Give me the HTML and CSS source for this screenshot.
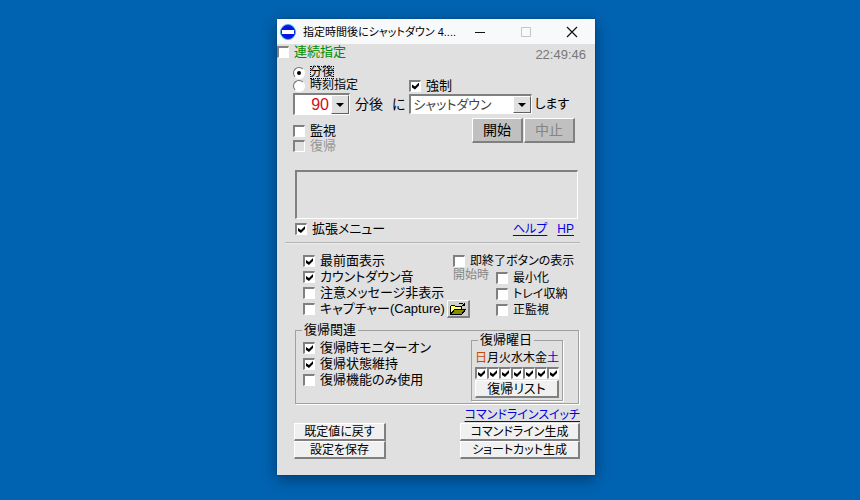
FILE: index.html
```html
<!DOCTYPE html>
<html lang="ja">
<head>
<meta charset="utf-8">
<title>指定時間後にシャットダウン</title>
<link rel="stylesheet" href="styles.css">
</head>
<body>
<main class="window">
  <header class="titlebar">
    <svg class="app-icon" viewBox="0 0 16 16" aria-hidden="true"><circle cx="8" cy="8" r="7.5" fill="#0b12e6" stroke="#35b6ee"/><rect x="2" y="6" width="12" height="4" fill="#fff"/></svg>
    <h1 class="title">指定時間後にシャットダウン 4....</h1>
    <button class="caption" aria-label="最小化ボタン"><svg viewBox="0 0 12 12"><path d="M1 6.500h10" stroke="#111"/></svg></button>
    <button class="caption" aria-label="最大化ボタン" disabled><svg viewBox="0 0 12 12"><path d="M1.500 1.500h9v9h-9z" stroke="#c4c4c4"/></svg></button>
    <button class="caption" aria-label="閉じる"><svg viewBox="0 0 12 12"><path d="M1 1l10 10M11 1L1 11" stroke="#111" stroke-width="1.200"/></svg></button>
  </header>

  <div class="top">
    <label class="opt repeat"><input type="checkbox">連続指定</label>
    <time class="clock">22:49:46</time>
  </div>

  <section class="timer">
    <div class="mode">
      <label class="opt small"><input type="radio" name="mode" checked><span class="focus">分後</span></label>
      <label class="opt small mode-time"><input type="radio" name="mode">時刻指定</label>
      <label class="opt"><input type="checkbox" checked>強制</label>
    </div>
    <div class="sentence">
      <span class="combo minutes"><select aria-label="分"><option>90</option></select></span>
      <span class="after">分後</span><span class="ni">に</span>
      <span class="combo action"><select aria-label="動作"><option>シャットダウン</option></select></span>
      <span>します</span>
    </div>
    <div class="run">
      <div class="watch">
        <label class="opt"><input type="checkbox">監視</label>
        <label class="opt disabled"><input type="checkbox" disabled>復帰</label>
      </div>
      <div class="run-buttons">
        <button class="btn big">開始</button>
        <button class="btn big" disabled>中止</button>
      </div>
    </div>
  </section>

  <div class="status" role="status"></div>

  <div class="menu-row">
    <label class="opt"><input type="checkbox" checked>拡張メニュー</label>
    <nav class="links small"><a href="#help">ヘルプ</a><a href="#hp">HP</a></nav>
  </div>
  <hr class="rule">

  <section class="options">
    <div class="list">
      <label class="opt"><input type="checkbox" checked>最前面表示</label>
      <label class="opt"><input type="checkbox" checked>カウントダウン音</label>
      <label class="opt"><input type="checkbox">注意メッセージ非表示</label>
      <div class="capture">
        <label class="opt"><input type="checkbox">キャプチャー(Capture)</label>
        <button class="btn folder" aria-label="フォルダー"><svg viewBox="0 0 18 14" shape-rendering="crispEdges"><path d="M1.500 12.500V4.500l1-1h3l1 1h6v3" fill="#ffff70" stroke="#000"/><path d="M1.500 12.500l4-5h11l-4 5z" fill="#8c8c00" stroke="#000"/><path d="M9.500 2.500l1-1h3l2 2M15.500 1v3M13 3.500h3" fill="none" stroke="#000"/></svg></button>
      </div>
    </div>
    <div class="startup small">
      <label class="opt"><input type="checkbox">即終了ボタンの表示</label>
      <div class="on-start">
        <span class="hint">開始時</span>
        <div class="list">
          <label class="opt"><input type="checkbox">最小化</label>
          <label class="opt"><input type="checkbox">トレイ収納</label>
          <label class="opt"><input type="checkbox">正監視</label>
        </div>
      </div>
    </div>
  </section>

  <fieldset class="group resume">
    <legend>復帰関連</legend>
    <div class="resume-body">
      <div class="list">
        <label class="opt"><input type="checkbox" checked>復帰時モニターオン</label>
        <label class="opt"><input type="checkbox" checked>復帰状態維持</label>
        <label class="opt"><input type="checkbox">復帰機能のみ使用</label>
      </div>
      <fieldset class="group days">
        <legend>復帰曜日</legend>
        <div class="week">
          <label class="sun">日<input type="checkbox" checked></label>
          <label>月<input type="checkbox" checked></label>
          <label>火<input type="checkbox" checked></label>
          <label>水<input type="checkbox" checked></label>
          <label>木<input type="checkbox" checked></label>
          <label>金<input type="checkbox" checked></label>
          <label class="sat">土<input type="checkbox" checked></label>
        </div>
        <button class="btn light">復帰リスト</button>
      </fieldset>
    </div>
  </fieldset>

  <footer class="bottom">
    <a class="switches small" href="#switch">コマンドラインスイッチ</a>
    <div class="actions">
      <div class="stack">
        <button class="btn light small">既定値に戻す</button>
        <button class="btn light small">設定を保存</button>
      </div>
      <div class="stack wide">
        <button class="btn light small">コマンドライン生成</button>
        <button class="btn light small">ショートカット生成</button>
      </div>
    </div>
  </footer>
</main>
</body>
</html>
```
FILE: styles.css
```css
* { box-sizing: border-box; }

body {
  margin: 0;
  min-height: 100vh;
  padding: 19px 0 24px 12px;
  display: flex;
  justify-content: center;
  align-items: flex-start;
  background: #0063b1;
  color: #000;
  font: 13px/16px "Liberation Sans", "Noto Sans CJK JP", sans-serif;
  font-feature-settings: "palt";
}

button, input, select { font: inherit; color: inherit; margin: 0; font-feature-settings: inherit; }
a { color: #0000e0; text-underline-offset: 2px; }
.small { font-size: 12px; }

.window {
  width: 100%;
  max-width: 318px;
  background: #e0e0e0;
  box-shadow: 0 0 1px #002f5c, 0 4px 14px rgba(0, 20, 50, .5);
}

.titlebar { display: flex; align-items: center; height: 25px; padding-left: 3px; background: #f8f9fb; }
.app-icon { width: 16px; height: 16px; flex: none; }
.title {
  flex: 1;
  margin: 0 0 0 7px;
  font-size: 11px;
  font-weight: 400;
  white-space: nowrap;
}
.caption {
  flex: none;
  width: 46px;
  height: 25px;
  padding: 0;
  border: 0;
  background: none;
  display: grid;
  place-items: center;
}
.caption svg { width: 12px; height: 12px; fill: none; }

.opt { display: flex; align-items: center; gap: 5px; white-space: nowrap; }

input {
  appearance: none;
  flex: none;
  width: 12px;
  height: 12px;
  background: #fff;
  border: 1px solid #fff;
  border-top: 2px solid #808080;
  border-left: 2px solid #808080;
  display: grid;
  place-items: center;
}
input[type="checkbox"]:checked::before {
  content: "";
  width: 7px;
  height: 7px;
  background: #000;
  clip-path: polygon(0 2px, 3px 4px, 7px 0, 7px 3px, 3px 7px, 0 5px);
}
input[type="radio"] { border-width: 1px; border-radius: 50%; border-color: #707070 #fff #fff #707070; }
input[type="radio"]:checked::before { content: ""; width: 4px; height: 4px; border-radius: 50%; background: #000; }
input:disabled { background: #e0e0e0; }
.disabled { color: #969696; }

.top { display: flex; justify-content: space-between; align-items: flex-start; height: 22px; padding-right: 9px; }
.repeat { color: #008c00; }
.clock { margin-top: 3px; color: #777; }

.timer { padding: 0 20px 0 16px; }
.mode { display: grid; grid-template-columns: 116px 1fr; grid-auto-rows: 13px; }
.mode-time { grid-column: 1; }
.mode .opt { line-height: 13px; }
.focus { outline: 1px dotted #000; outline-offset: -1px; }

.sentence { display: flex; align-items: center; height: 22px; margin-top: 1px; white-space: nowrap; }
.after { margin-left: 5px; font-size: 14px; }
.ni { margin: 0 4px 0 9px; font-size: 14px; }

.combo {
  position: relative;
  display: block;
  border: 1px solid #fff;
  border-top: 2px solid #808080;
  border-left: 2px solid #808080;
  background: #fff;
}
.combo select {
  appearance: none;
  display: block;
  width: 100%;
  height: 100%;
  border: 0;
  padding: 0 17px 0 2px;
  background: none;
}
.combo::after {
  content: "";
  position: absolute;
  inset: 0 0 0 auto;
  width: 16px;
  pointer-events: none;
  background: #e0e0e0;
  border: 1px solid #fff;
  border-right-color: #606060;
  border-bottom-color: #606060;
}
.combo::before {
  content: "";
  position: absolute;
  z-index: 1;
  right: 5px;
  top: 50%;
  margin-top: -2px;
  border: 4px solid transparent;
  border-top: 4px solid #000;
  border-bottom: 0;
  pointer-events: none;
}
.minutes { width: 57px; height: 22px; }
.minutes select { color: #d01020; font-size: 16px; padding-right: 20px; text-align-last: right; }
.action { flex: 1; max-width: 123px; height: 20px; margin-right: 2px; }
.action select { color: #444; }

.run { display: flex; justify-content: space-between; align-items: flex-start; padding-top: 3px; height: 39px; }
.watch { padding-top: 5px; }
.watch .opt { height: 15px; }
.run-buttons { display: flex; gap: 1px; }

.btn {
  padding: 0;
  border: 1px solid #fff;
  border-right: 2px solid #808080;
  border-bottom: 2px solid #808080;
  background: #c0c0c0;
  white-space: nowrap;
}
.btn:disabled { color: #858585; }
.big { width: 51px; height: 25px; font-size: 14px; line-height: 20px; }
.light { display: block; width: 100%; height: 18px; line-height: 14px; background: #f0f0f0; }

.status {
  margin: 16px 17px 0 18px;
  height: 49px;
  border: 1px solid #fff;
  border-top: 2px solid #808080;
  border-left: 2px solid #808080;
}

.menu-row { display: flex; justify-content: space-between; margin: 2px 21px 0 18px; }
.links { display: flex; gap: 10px; }
.rule { margin: 5px 15px 0 8px; border: 0; border-top: 1px solid #b4b4b4; border-bottom: 1px solid #ececec; }

.options { display: flex; padding: 9px 16px 0 26px; }
.list { display: grid; grid-auto-rows: 16px; }
.options > .list { width: 150px; }
.options > .list > .opt:nth-child(3), .capture .opt { font-size: 13px; }
.capture { display: flex; align-items: center; justify-content: space-between; }
.folder { width: 23px; height: 18px; margin-right: -17px; display: grid; place-items: center; flex: none; background: #d0d0d0; }
.capture { padding-right: 0; width: 150px; }
.folder svg { width: 18px; height: 14px; }
.on-start { display: flex; gap: 7px; margin-top: 1px; }
.hint { width: 36px; line-height: 10px; color: #868686; }

.group { min-width: 0; margin: 0; border: 1px solid #a0a0a0; box-shadow: 1px 1px 0 #fff; }
.group legend { padding: 0 2px; line-height: 16px; }
.resume { margin: 4px 16px 0 18px; padding: 2px 15px 2px 7px; }
.resume legend { margin-left: -1px; }
.resume-body { display: flex; justify-content: space-between; align-items: flex-start; }
.days { width: 92px; margin-top: -8px; padding: 2px 3px; }
.days legend { margin-left: 3px; }
.week { display: grid; grid-template-columns: repeat(7, 12px); }
.week label { display: grid; justify-items: center; grid-template-rows: 17px 13px; font-size: 12px; }
.sun { color: #c84800; }
.sat { color: #0000e0; }

.bottom { display: grid; padding: 3px 15px 16px 17px; }
.switches { justify-self: end; }
.actions { display: flex; justify-content: space-between; }
.stack { width: 92px; }
.wide { width: 120px; }
```
